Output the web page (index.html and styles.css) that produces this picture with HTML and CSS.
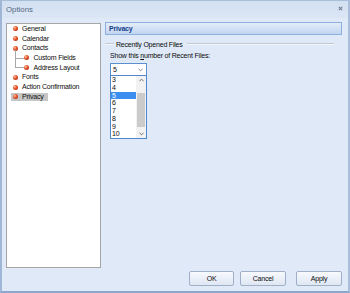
FILE: index.html
```html
<!DOCTYPE html>
<html lang="en">
<head>
  <meta charset="UTF-8">
  <title>Options</title>
  <link rel="stylesheet" href="styles.css">
</head>
<body>
  <div class="window">
    <div class="titlebar">
      <span class="title">Options</span>
      <svg class="close" viewBox="0 0 6 6"><path d="M1 1 L5 5 M5 1 L1 5"></path></svg>
    </div>

    <div class="main">
      <!-- left tree -->
      <div class="tree">
        <div class="node">General</div>
        <div class="node">Calendar</div>
        <div class="node">Contacts</div>
        <div class="children">
          <div class="node child">Custom Fields</div>
          <div class="node child last">Address Layout</div>
        </div>
        <div class="node">Fonts</div>
        <div class="node">Action Confirmation</div>
        <div class="node selected"><span>Privacy</span></div>
      </div>

      <!-- right page -->
      <div class="page">
        <div class="page-header">Privacy</div>
        <div class="group-title">
          <span class="rule short"></span>
          <span>Recently Opened Files</span>
          <span class="rule"></span>
        </div>
        <div class="field-label">Show this <u>n</u>umber of Recent Files:</div>
        <div class="combo">
          <span>5</span>
          <svg class="chev" viewBox="0 0 6 4"><path d="M0.5 0.5 L3 3 L5.5 0.5"></path></svg>
        </div>
        <div class="list">
          <div class="options">
            <div class="opt">3</div>
            <div class="opt">4</div>
            <div class="opt active">5</div>
            <div class="opt">6</div>
            <div class="opt">7</div>
            <div class="opt">8</div>
            <div class="opt">9</div>
            <div class="opt">10</div>
          </div>
          <div class="scrollbar">
            <div class="arrow"><svg viewBox="0 0 6 4"><path d="M0.5 3.5 L3 1 L5.5 3.5"></path></svg></div>
            <div class="track"><div class="thumb"></div></div>
            <div class="arrow"><svg viewBox="0 0 6 4"><path d="M0.5 0.5 L3 3 L5.5 0.5"></path></svg></div>
          </div>
        </div>
      </div>
    </div>

    <div class="footer">
      <button class="btn ok">OK</button>
      <button class="btn cancel">Cancel</button>
      <button class="btn apply"><u>A</u>pply</button>
    </div>
  </div>
</body>
</html>
```

FILE: styles.css
```css
body {
  margin: 0;
  font-family: 'Liberation Sans', Arial, sans-serif;
  font-size: 7px;
  letter-spacing: -0.2px;
  color: #0c0c0c;
}
.window {
  box-sizing: border-box;
  width: 350px;
  height: 293px;
  background-color: #dfe9f8;
  border-top: 1px solid #a9bedb;
  border-left: 2px solid #9fb6d7;
  border-right: 2px solid #a9bedb;
  border-bottom: 2px solid #8ba7cd;
  display: flex;
  flex-direction: column;
}
.titlebar {
  height: 17px;
  flex-shrink: 0;
  display: flex;
  align-items: center;
  justify-content: space-between;
  padding: 0 5px 0 4px;
  background: linear-gradient(#d3e0f1, #dbe6f5);
}
.title {
  font-size: 7.8px;
  letter-spacing: 0;
  color: #55687f;
}
.close {
  width: 5px;
  height: 5px;
  stroke: #6f7d91;
  stroke-width: 1.3;
  margin-top: -2px;
}
.main {
  display: flex;
  gap: 4px;
  padding: 4px 6px 0 4px;
  height: 250px;
  box-sizing: border-box;
}
.tree {
  box-sizing: border-box;
  width: 95px;
  height: 245px;
  margin-top: 1px;
  background-color: #fff;
  border: 1px solid #a6a6a6;
  padding-left: 2px;
}
.node {
  position: relative;
  height: 9.7px;
  line-height: 9.7px;
  padding-left: 13px;
  white-space: nowrap;
}
.node::before {
  content: "";
  position: absolute;
  left: 4px;
  top: 2.4px;
  width: 5px;
  height: 5px;
  border-radius: 50%;
  background: radial-gradient(circle at 35% 35%, #ffc29a 0%, #e2502a 45%, #9c2410 100%);
}
.children {
  position: relative;
}
.children::before {
  content: "";
  position: absolute;
  left: 6px;
  top: -3px;
  height: 17.5px;
  border-left: 1px solid #a8a8a8;
}
.child {
  padding-left: 24.5px;
}
.child::before {
  left: 15px;
}
.child::after {
  content: "";
  position: absolute;
  left: 6.5px;
  top: 4.5px;
  width: 8px;
  border-top: 1px solid #a8a8a8;
}
.selected span {
  display: inline-block;
  margin-left: -11px;
  padding: 0 4px 0 11px;
  line-height: 8px;
  background-color: #c6c6c6;
}
.page {
  width: 237px;
}
.page-header {
  box-sizing: border-box;
  height: 13px;
  line-height: 11px;
  padding-left: 3px;
  border: 1px solid #8eb0de;
  background: linear-gradient(#e4edf9, #c0d5f1);
  font-weight: bold;
  color: #17418c;
}
.group-title {
  display: flex;
  align-items: center;
  gap: 2px;
  height: 10px;
  margin-top: 4px;
  margin-right: 8px;
}
.rule {
  flex: 1;
  border-top: 1px solid #c3c9d2;
  border-bottom: 1px solid #f3f6fb;
  margin-left: 2px;
}
.rule.short {
  flex: 0 0 9px;
  margin-left: 0;
}
.field-label {
  margin: 2px 0 0 5px;
  line-height: 9px;
}
.combo {
  box-sizing: border-box;
  width: 37px;
  height: 13px;
  margin: 3px 0 0 5px;
  border: 1px solid #5c8fd0;
  background-color: #fff;
  display: flex;
  align-items: center;
  justify-content: space-between;
  padding: 0 3px 0 2px;
}
.chev {
  width: 5px;
  height: 4px;
  fill: none;
  stroke: #6a7788;
  stroke-width: 1;
}
.list {
  box-sizing: border-box;
  width: 37px;
  height: 64px;
  margin: -1px 0 0 5px;
  border: 1px solid #4f86cc;
  background-color: #fff;
  display: flex;
}
.options {
  flex: 1;
}
.opt {
  height: 7.75px;
  line-height: 7.75px;
  padding-left: 1px;
}
.opt.active {
  background-color: #3b8ef0;
  color: #fff;
}
.scrollbar {
  width: 10px;
  display: flex;
  flex-direction: column;
  background-color: #f2f2f2;
}
.arrow {
  height: 8px;
  display: flex;
  align-items: center;
  justify-content: center;
}
.arrow svg {
  width: 5px;
  height: 4px;
  fill: none;
  stroke: #505a66;
  stroke-width: 1;
}
.track {
  flex: 1;
  padding: 9px 1px 4px;
}
.thumb {
  height: 34px;
  background-color: #cbcbcb;
}
.footer {
  display: flex;
  justify-content: flex-end;
  padding: 3px 6px 0 0;
}
.btn {
  box-sizing: border-box;
  height: 15px;
  padding: 0;
  font-family: inherit;
  font-size: 7px;
  letter-spacing: -0.2px;
  color: #0c0c0c;
  border: 1px solid #9fb0c8;
  border-radius: 2px;
  background: linear-gradient(#f7f9fd, #dfe7f3);
}
.btn u {
  text-decoration: none;
}
.ok {
  width: 45px;
}
.cancel {
  width: 46px;
  margin-left: 6px;
}
.apply {
  width: 46px;
  margin-left: 10px;
}
```
